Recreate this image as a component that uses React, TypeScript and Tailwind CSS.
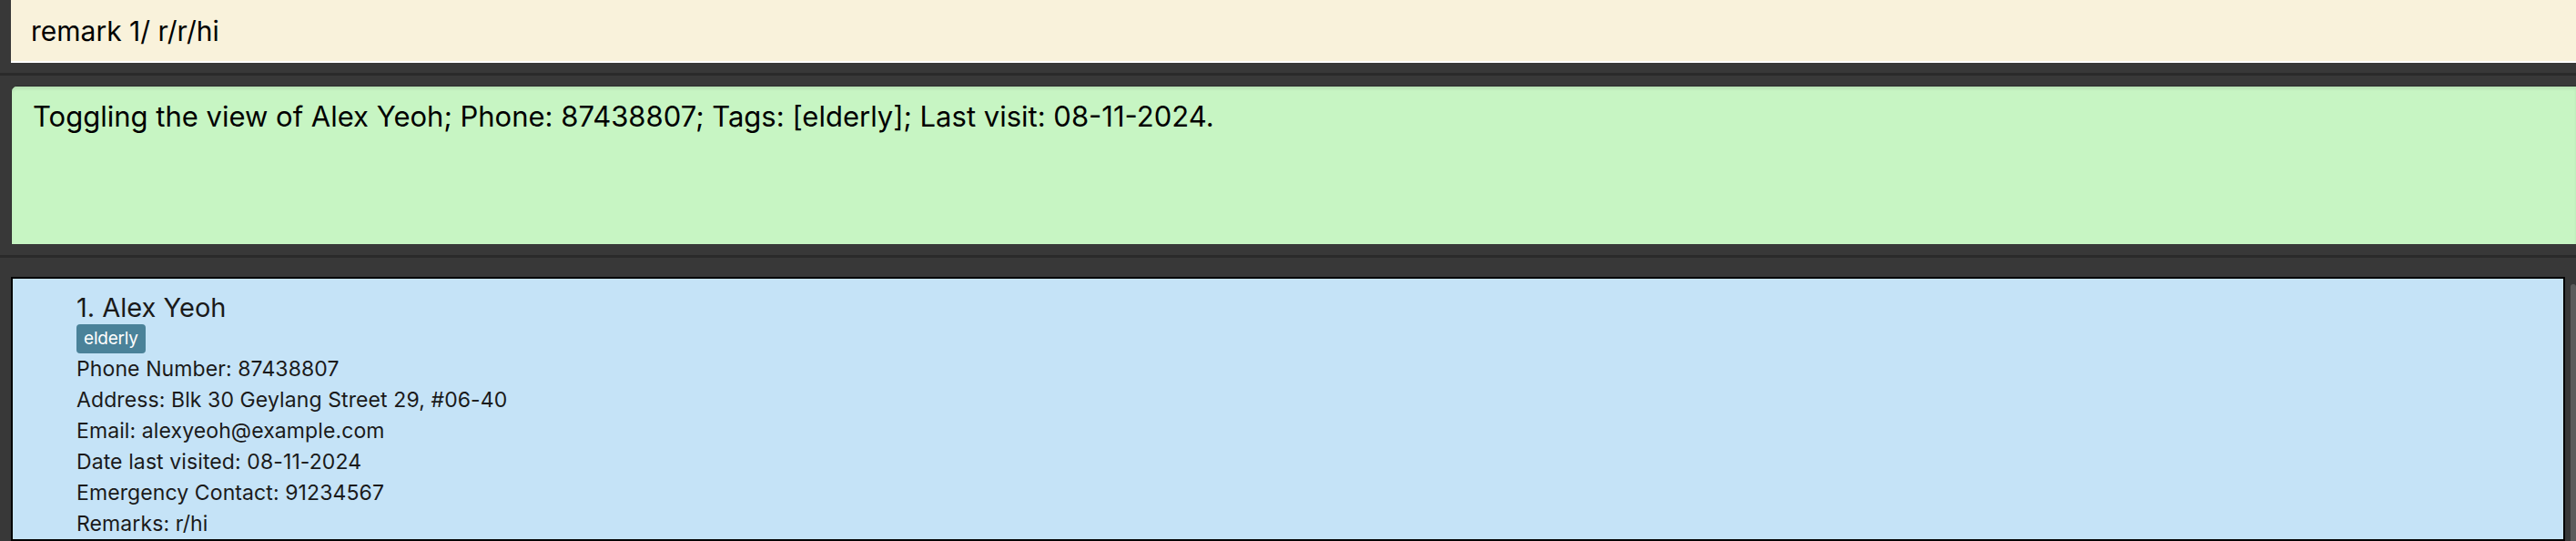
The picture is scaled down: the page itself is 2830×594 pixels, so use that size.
import React from "react";

export default function App() {
  const details = [
    "Phone Number: 87438807",
    "Address: Blk 30 Geylang Street 29, #06-40",
    "Email: alexyeoh@example.com",
    "Date last visited: 08-11-2024",
    "Emergency Contact: 91234567",
    "Remarks: r/hi",
  ];
  return (
    <div className="w-[2830px] h-[594px] bg-[#383838] overflow-hidden flex flex-col font-['Inter',sans-serif]">
      {/* command box */}
      <div className="h-[69px] pl-[12px] flex shrink-0">
        <div className="flex-1 bg-[#f9f2db] border-b-2 border-white pl-[22px] pt-[1px] text-[30px] leading-[66px] text-black">
          remark 1/ r/r/hi
        </div>
      </div>
      <div className="h-[11px] shrink-0" />
      <div className="h-[3px] bg-[#2a2a2a] shrink-0" />
      <div className="h-[11px] shrink-0" />
      {/* result box */}
      <div className="h-[174px] ml-[12px] shrink-0 bg-[#c7f5c3] rounded-tl-[6px] border-l border-t border-[#2c2c2c] shadow-[inset_0_3px_3px_rgba(0,0,0,0.08)] pl-[23px] pt-[13px] text-[31px] leading-[40px] text-black">
        Toggling the view of Alex Yeoh; Phone: 87438807; Tags: [elderly]; Last visit: 08-11-2024.
      </div>
      <div className="h-[12px] shrink-0" />
      <div className="h-[3px] bg-[#2a2a2a] shrink-0" />
      <div className="h-[21px] shrink-0" />
      {/* list */}
      <div className="flex flex-1 pl-[12px] min-h-0">
        <div className="w-[2806px] bg-[#c5e3f7] border-2 border-black pl-[70px] pt-[14px] text-[#1a1a1a]">
          <div className="text-[29px] leading-[36px]">1. Alex Yeoh</div>
          <div className="flex">
            <span className="h-[32px] px-[8px] rounded-[4px] bg-[#4a8299] text-white text-[19px] leading-[32px] tracking-[-0.2px]">
              elderly
            </span>
          </div>
          {details.map((d) => (
            <div key={d} className="text-[23px] leading-[34px] tracking-[0.1px]">
              {d}
            </div>
          ))}
        </div>
        <div className="w-[6px] shrink-0" />
        <div className="w-[6px] shrink-0 pt-[8px]">
          <div className="h-full bg-[#5c5c5c] rounded-t-[4px]" />
        </div>
      </div>
    </div>
  );
}
